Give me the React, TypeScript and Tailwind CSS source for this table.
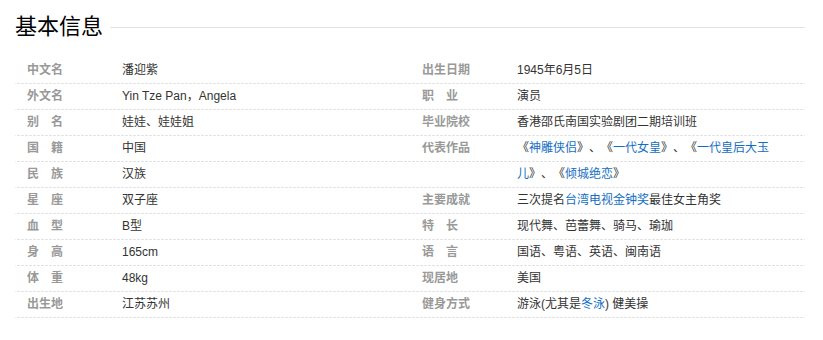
type Part = string | { link: string };
type Row = { label: string; value: Part[] };

const left: Row[] = [
  { label: "中文名", value: ["潘迎紫"] },
  { label: "外文名", value: ["Yin Tze Pan，Angela"] },
  { label: "别　名", value: ["娃娃、娃娃姐"] },
  { label: "国　籍", value: ["中国"] },
  { label: "民　族", value: ["汉族"] },
  { label: "星　座", value: ["双子座"] },
  { label: "血　型", value: ["B型"] },
  { label: "身　高", value: ["165cm"] },
  { label: "体　重", value: ["48kg"] },
  { label: "出生地", value: ["江苏苏州"] },
];

const right: Row[] = [
  { label: "出生日期", value: ["1945年6月5日"] },
  { label: "职　业", value: ["演员"] },
  { label: "毕业院校", value: ["香港邵氏南国实验剧团二期培训班"] },
  {
    label: "代表作品",
    value: ["《", { link: "神雕侠侣" }, "》、《", { link: "一代女皇" }, "》、《", { link: "一代皇后大玉" }],
  },
  { label: "", value: [{ link: "儿" }, "》、《", { link: "倾城绝恋" }, "》"] },
  { label: "主要成就", value: ["三次提名", { link: "台湾电视金钟奖" }, "最佳女主角奖"] },
  { label: "特　长", value: ["现代舞、芭蕾舞、骑马、瑜珈"] },
  { label: "语　言", value: ["国语、粤语、英语、闽南语"] },
  { label: "现居地", value: ["美国"] },
  { label: "健身方式", value: ["游泳(尤其是", { link: "冬泳" }, ") 健美操"] },
];

const dash =
  "bg-[linear-gradient(to_right,#d6d6d6_50%,transparent_50%)] bg-[length:4px_1px] bg-repeat-x bg-bottom";

function InfoRow({ row, labelPad, labelWidth }: { row: Row; labelPad: string; labelWidth: string }) {
  return (
    <div className={`flex h-[26px] leading-[25px] ${dash}`}>
      <div className={`${labelPad} ${labelWidth} shrink-0 font-bold text-[#999]`}>{row.label}</div>
      <div className="text-[#333] whitespace-nowrap [text-spacing-trim:space-all]">
        {row.value.map((p, i) =>
          typeof p === "string" ? (
            <span key={i}>{p}</span>
          ) : (
            <span key={i} className="text-[#136ec2]">
              {p.link}
            </span>
          )
        )}
      </div>
    </div>
  );
}

export default function App() {
  return (
    <div
      className="w-[823px] h-[340px] bg-white text-[12px] pl-[15px] pt-[13px]"
      style={{ fontFamily: '"Liberation Sans", "Noto Sans CJK SC", sans-serif' }}
    >
      <div className="flex items-center w-[790px]">
        <h2 className="text-[22px] leading-[28px] text-black font-normal">基本信息</h2>
        <div className="flex-1 h-px bg-[#e3e3e3] ml-[7px]"></div>
      </div>
      <div className="flex mt-[17px]">
        <div className="w-[385px]">
          {left.map((r, i) => (
            <InfoRow key={i} row={r} labelPad="pl-[12px]" labelWidth="w-[107px]" />
          ))}
        </div>
        <div className="w-[405px]">
          {right.map((r, i) => (
            <InfoRow key={i} row={r} labelPad="pl-[22px]" labelWidth="w-[117px]" />
          ))}
        </div>
      </div>
    </div>
  );
}
